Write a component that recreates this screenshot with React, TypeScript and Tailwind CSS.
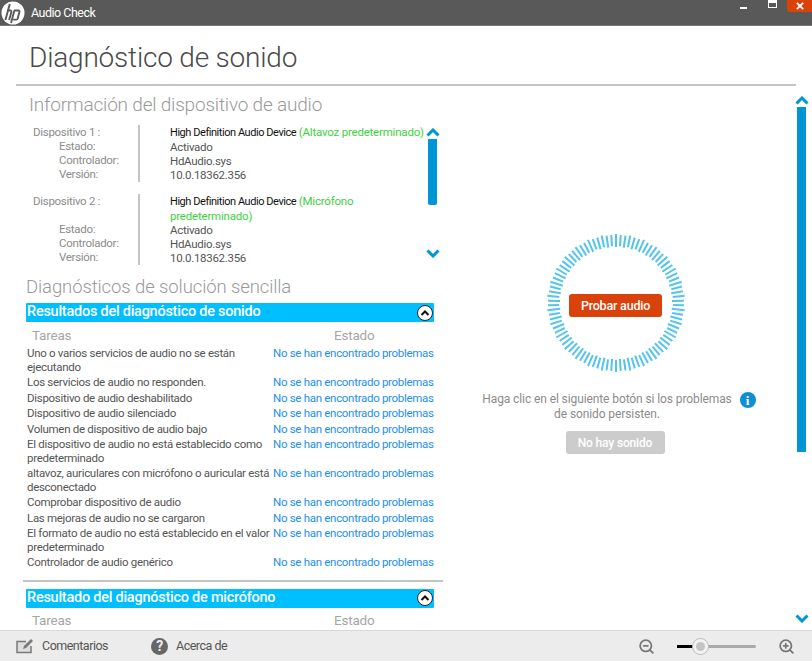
import { ZoomIn, ZoomOut } from "lucide-react";

const ok = "No se han encontrado problemas";

const tasks = [
  "Uno o varios servicios de audio no se están ejecutando",
  "Los servicios de audio no responden.",
  "Dispositivo de audio deshabilitado",
  "Dispositivo de audio silenciado",
  "Volumen de dispositivo de audio bajo",
  "El dispositivo de audio no está establecido como predeterminado",
  "altavoz, auriculares con micrófono o auricular está desconectado",
  "Comprobar dispositivo de audio",
  "Las mejoras de audio no se cargaron",
  "El formato de audio no está establecido en el valor predeterminado",
  "Controlador de audio genérico",
];

function HpLogo() {
  return (
    <svg viewBox="0 0 24 24" className="h-[24px] w-[24px]">
      <circle cx="12" cy="12" r="11.5" fill="#fff" />
      <path
        d="M8.8 3 4.4 19M6 9.5h3.4c.9 0 1.2.6 1 1.4L8.1 19M13.4 9.5 10 22M13 9.5h4.4c.9 0 1.2.6 1 1.4l-1.7 6.7c-.2.7-.7 1-1.4 1h-3.2"
        fill="none"
        stroke="#595959"
        strokeWidth="1.9"
      />
    </svg>
  );
}

function Chevron({ down = false }: { down?: boolean }) {
  return (
    <svg viewBox="0 0 14 9" className="h-[9px] w-[14px] shrink-0">
      <path
        d={down ? "M1.5 1.5 7 7l5.5-5.5" : "M1.5 7.5 7 2l5.5 5.5"}
        fill="none"
        stroke="#0096d6"
        strokeWidth="3"
      />
    </svg>
  );
}

function Ring() {
  const ticks = Array.from({ length: 90 }, (_, i) => i * 4);
  return (
    <svg viewBox="0 0 140 140" className="h-[140px] w-[140px]">
      {ticks.map((a, i) => (
        <line
          key={a}
          x1="70"
          y1={i % 3 === 0 ? 1 : 2}
          x2="70"
          y2={i % 2 === 0 ? 14 : 13}
          stroke="#55c4ea"
          strokeWidth="2"
          transform={`rotate(${a} 70 70)`}
        />
      ))}
    </svg>
  );
}

function Device({ n, children }: { n: number; children: React.ReactNode }) {
  return (
    <div className="flex">
      <div className="w-[105px] shrink-0 text-[#8c8c8c]">
        <div>Dispositivo {n} :</div>
        {n === 2 && <div>&nbsp;</div>}
        <div className="pl-[26px]">Estado:</div>
        <div className="pl-[26px]">Controlador:</div>
        <div className="pl-[26px]">Versión:</div>
      </div>
      <div className="w-[2px] shrink-0 bg-[#c4c4c4]" />
      <div className="ml-[30px] flex-1 text-[#555]">
        <div>
          <span className="text-[11px] tracking-[-0.45px] text-[#111]">High Definition Audio Device</span>{" "}
          <span className="tracking-[-0.2px] text-[#3fd13f]">{children}</span>
        </div>
        <div>Activado</div>
        <div>HdAudio.sys</div>
        <div>10.0.18362.356</div>
      </div>
    </div>
  );
}

function SectionBar({ title }: { title: string }) {
  return (
    <div className="ml-[10px] flex h-[19px] w-[408px] items-center justify-between rounded-[1px] bg-[#00bfff] pl-[1px] pr-[1px]">
      <span className="text-[14.5px] font-medium leading-none tracking-[-0.25px] text-white">{title}</span>
      <span className="flex h-[16px] w-[16px] items-center justify-center rounded-full border border-[#222] bg-white">
        <svg viewBox="0 0 10 6" className="h-[6px] w-[10px]">
          <path d="M1.5 5 5 1.5 8.5 5" fill="none" stroke="#111" strokeWidth="2" />
        </svg>
      </span>
    </div>
  );
}

function TableHead() {
  return (
    <div className="ml-[16px] flex text-[13.5px] leading-[16px] tracking-[-0.2px] text-[#a6a6a6]">
      <div className="w-[302px]">Tareas</div>
      <div>Estado</div>
    </div>
  );
}

export default function App() {
  return (
    <div className="flex h-[661px] w-[812px] flex-col overflow-hidden bg-white font-['Roboto','Liberation_Sans',sans-serif] text-[11.5px] leading-[14px] tracking-[-0.3px]">
      <header className="flex h-[26px] shrink-0 items-center border-b border-[#777] bg-[#595959] pl-[1px]">
        <HpLogo />
        <span className="ml-[6px] text-[12.5px] tracking-[-0.5px] text-white">Audio Check</span>
        <div className="ml-auto flex h-full items-start">
          <div className="mr-[21px] mt-[7px] h-[2px] w-[7px] bg-white" />
          <div className="mr-[10px] h-[8px] w-[9px] border-[1.5px] border-t-[3px] border-white" />
          <div className="flex h-[12px] w-[25px] items-center justify-center rounded-bl-[3px] bg-[#d9420b]">
            <svg viewBox="0 0 9 9" className="h-[8px] w-[8px]">
              <path d="M1 1l7 7M8 1 1 8" stroke="#fff" strokeWidth="2" />
            </svg>
          </div>
        </div>
      </header>

      <main className="flex min-h-0 flex-1 overflow-hidden">
        <div className="w-[796px] shrink-0 pl-[16px]">
          <h1 className="ml-[13px] mt-[14px] text-[28px] font-light leading-[36px] tracking-[-0.2px] text-[#4a4a4a]">Diagnóstico de sonido</h1>
          <div className="mt-[8px] h-[2px] bg-[#c4c4c4]" />
          <div className="flex">
            <div className="w-[427px] shrink-0">
              <h2 className="ml-[13px] mt-[7px] text-[19px] font-light leading-[24px] tracking-[-0.2px] text-[#999]">Información del dispositivo de audio</h2>
              <div className="mt-[8px] flex">
                <div className="ml-[17px] flex w-[393px] flex-col gap-[12px]">
                  <Device n={1}>(Altavoz predeterminado)</Device>
                  <Device n={2}>
                    (Micrófono
                    <br />
                    predeterminado)
                  </Device>
                </div>
                <div className="flex h-[133px] w-[13px] shrink-0 flex-col items-center pt-[3px]">
                  <Chevron />
                  <div className="mt-[2px] h-[66px] w-[9px] rounded-b-[2px] bg-[#0096d6]" />
                  <div className="mt-auto">
                    <Chevron down />
                  </div>
                </div>
              </div>
              <h2 className="ml-[10px] mt-[10px] text-[18.5px] font-light leading-[24px] tracking-[-0.1px] text-[#999]">Diagnósticos de solución sencilla</h2>
              <div className="mt-[4px]">
                <SectionBar title="Resultados del diagnóstico de sonido" />
              </div>
              <div className="mt-[5px]">
                <TableHead />
              </div>
              <div className="ml-[11px] mt-[4px] flex flex-col gap-[2px] leading-[13.5px]">
                {tasks.map((t) => (
                  <div key={t} className="flex">
                    <div className="w-[246px] shrink-0 text-[#555]">{t}</div>
                    <div className="whitespace-nowrap text-[#1e8ff0]">{ok}</div>
                  </div>
                ))}
              </div>
              <div className="ml-[7px] mt-[10px] h-[2px] bg-[#c4c4c4]" />
              <div className="mt-[7px]">
                <SectionBar title="Resultado del diagnóstico de micrófono" />
              </div>
              <div className="mt-[4px]">
                <TableHead />
              </div>
            </div>

            <div className="flex flex-1 flex-col items-center pr-[7px] pt-[147px]">
              <div className="relative flex h-[140px] w-[140px] items-center justify-center">
                <Ring />
                <button className="absolute left-[23px] top-[61px] h-[23px] w-[93px] rounded-[3px] bg-[#d9420b] text-[12.5px] font-medium tracking-[-0.2px] text-white">
                  Probar audio
                </button>
              </div>
              <div className="relative mr-[18px] mt-[19px] w-[255px] text-center text-[12px] leading-[15px] tracking-[-0.1px] text-[#8c8c8c]">
                Haga clic en el siguiente botón si los problemas de sonido persisten.
                <span className="absolute left-[260px] top-0 flex h-[16px] w-[16px] items-center justify-center rounded-full bg-[#0f8fd0] font-['Liberation_Serif',serif] text-[13px] font-bold text-white">
                  i
                </span>
              </div>
              <button className="mr-[2px] mt-[9px] h-[23px] w-[99px] rounded-[3px] bg-[#cccccc] text-[12px] font-medium tracking-[-0.15px] text-white">
                No hay sonido
              </button>
            </div>
          </div>
        </div>

        <div className="flex w-[16px] flex-col items-center pr-[5px] pt-[70px]">
          <Chevron />
          <div className="mt-[2px] h-[345px] w-[9px] shrink-0 bg-[#0096d6]" />
          <div className="mb-[7px] mt-auto">
            <Chevron down />
          </div>
        </div>
      </main>

      <footer className="flex h-[31px] shrink-0 items-center border-t border-[#d9d9d9] bg-[#ececec] pl-[16px] text-[12.5px] tracking-[-0.5px] text-[#555]">
        <svg viewBox="0 0 18 16" className="h-[16px] w-[18px] shrink-0">
          <path d="M10 3.5H1v11h14V8" fill="#ddd" stroke="#7a7a7a" strokeWidth="1.5" />
          <path d="M7 11l1-3 7-7 2 2-7 7z" fill="#7a7a7a" />
        </svg>
        <span className="ml-[8px] whitespace-nowrap">Comentarios</span>
        <span className="ml-[43px] flex h-[17px] w-[17px] shrink-0 items-center justify-center rounded-full bg-[#666] text-[14px] font-bold leading-none text-[#ececec]">
          ?
        </span>
        <span className="ml-[8px] whitespace-nowrap">Acerca de</span>
        <ZoomOut className="ml-[411px] h-[17px] w-[17px] shrink-0 text-[#777]" strokeWidth={2.5} />
        <div className="relative ml-[22px] h-[3px] w-[79px] shrink-0 rounded bg-[#aaa]">
          <div className="h-full w-[16px] bg-black" />
          <div className="absolute left-[15px] top-[-7px] h-[17px] w-[17px] rounded-full border border-[#bbb] bg-[#f2f2f2] p-[3px]">
            <div className="h-full w-full rounded-full bg-[#c4c4c4]" />
          </div>
        </div>
        <ZoomIn className="ml-[22px] h-[17px] w-[17px] shrink-0 text-[#777]" strokeWidth={2.5} />
      </footer>
    </div>
  );
}
